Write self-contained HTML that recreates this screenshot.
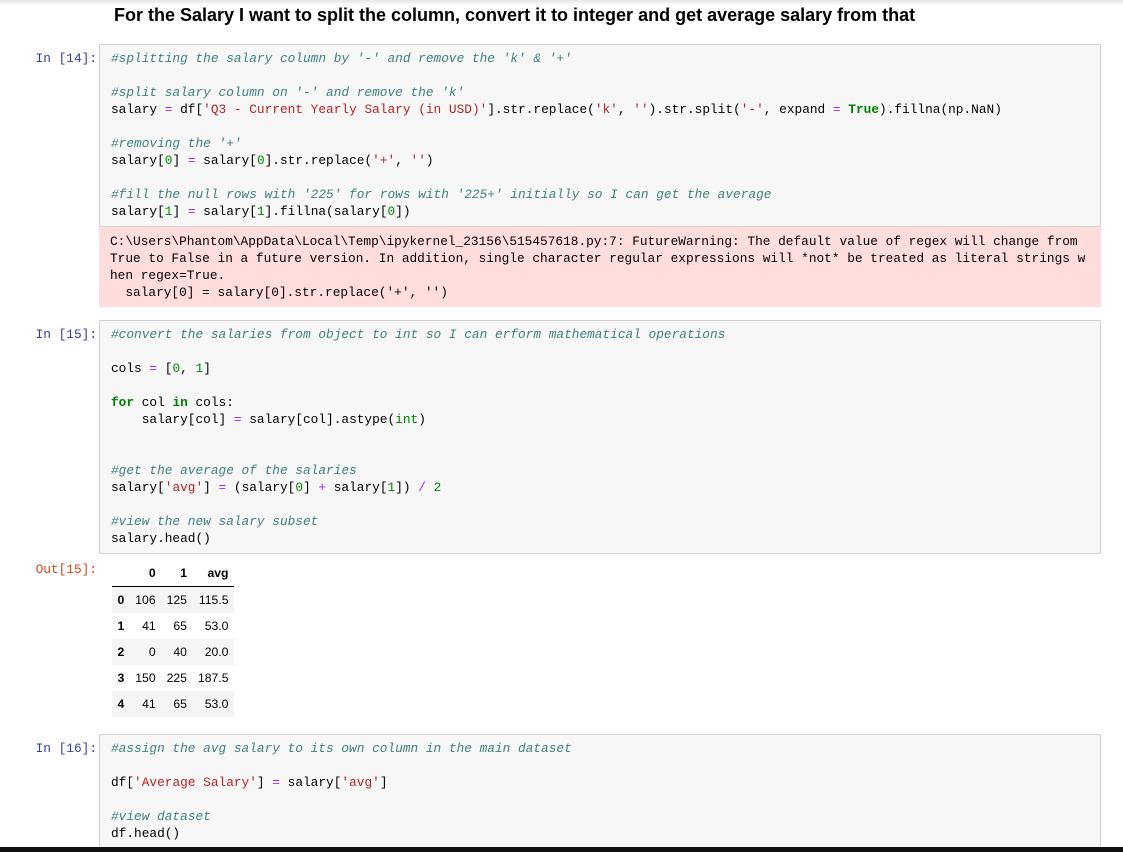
<!DOCTYPE html>
<html><head><style>
html,body{margin:0;width:1123px;height:852px;overflow:hidden}
body{background:#fff;font-family:"Liberation Sans",sans-serif;position:relative}
.top{position:absolute;left:0;top:0;width:1123px;height:6px;background:linear-gradient(#e6e6e6,#fff)}
h3{position:absolute;left:114px;top:5px;margin:0;font-size:18px;font-weight:bold;color:#000}
.p{position:absolute;width:97px;text-align:right;font-family:"Liberation Mono",monospace;font-size:12.8px;color:#303F9F;line-height:17px}
.o{color:#D84315}
.cell{position:absolute;left:99px;width:1000px;background:#f7f7f7;border:1px solid #cfcfcf;border-radius:2px}
pre{margin:0;padding:5px 0 0 11px;font-family:"Liberation Mono",monospace;font-size:12.8px;line-height:17px;color:#000;white-space:pre}
.c{color:#408080;font-style:italic}.s{color:#BA2121}.n{color:#080}.op{color:#AA22FF}.k{color:#008000;font-weight:bold}.b{color:#008000}
.err{position:absolute;left:99px;top:227px;width:1002px;height:80px;background:#fdd}
.err pre{padding-top:6px}
table{position:absolute;left:112px;top:560px;border-collapse:collapse;font-size:12.2px;color:#000}
td,th{text-align:right;padding:0 5.5px;height:26px;line-height:26px}
thead th{border-bottom:1px solid #000;height:25px}
tbody tr:nth-child(odd){background:#f5f5f5}
.bot{position:absolute;left:0;top:847px;width:1123px;height:5px;background:#111;z-index:5}
</style></head><body>
<div class="top"></div>
<h3>For the Salary I want to split the column, convert it to integer and get average salary from that</h3>

<div class="p" style="top:50px">In [14]:</div>
<div class="cell" style="top:44px;height:181px"><pre><span class="c">#splitting the salary column by '-' and remove the 'k' &amp; '+'</span>

<span class="c">#split salary column on '-' and remove the 'k'</span>
salary <span class="op">=</span> df[<span class="s">'Q3 - Current Yearly Salary (in USD)'</span>].str.replace(<span class="s">'k'</span>, <span class="s">''</span>).str.split(<span class="s">'-'</span>, expand <span class="op">=</span> <span class="k">True</span>).fillna(np.NaN)

<span class="c">#removing the '+'</span>
salary[<span class="n">0</span>] <span class="op">=</span> salary[<span class="n">0</span>].str.replace(<span class="s">'+'</span>, <span class="s">''</span>)

<span class="c">#fill the null rows with '225' for rows with '225+' initially so I can get the average</span>
salary[<span class="n">1</span>] <span class="op">=</span> salary[<span class="n">1</span>].fillna(salary[<span class="n">0</span>])</pre></div>
<div class="err"><pre>C:\Users\Phantom\AppData\Local\Temp\ipykernel_23156\515457618.py:7: FutureWarning: The default value of regex will change from
True to False in a future version. In addition, single character regular expressions will *not* be treated as literal strings w
hen regex=True.
  salary[0] = salary[0].str.replace('+', '')</pre></div>

<div class="p" style="top:326px">In [15]:</div>
<div class="cell" style="top:320px;height:232px"><pre><span class="c">#convert the salaries from object to int so I can erform mathematical operations</span>

cols <span class="op">=</span> [<span class="n">0</span>, <span class="n">1</span>]

<span class="k">for</span> col <span class="k">in</span> cols:
    salary[col] <span class="op">=</span> salary[col].astype(<span class="b">int</span>)


<span class="c">#get the average of the salaries</span>
salary[<span class="s">'avg'</span>] <span class="op">=</span> (salary[<span class="n">0</span>] <span class="op">+</span> salary[<span class="n">1</span>]) <span class="op">/</span> <span class="n">2</span>

<span class="c">#view the new salary subset</span>
salary.head()</pre></div>

<div class="p o" style="top:561px">Out[15]:</div>
<table><thead><tr><th></th><th>0</th><th>1</th><th>avg</th></tr></thead>
<tbody>
<tr><th>0</th><td>106</td><td>125</td><td>115.5</td></tr>
<tr><th>1</th><td>41</td><td>65</td><td>53.0</td></tr>
<tr><th>2</th><td>0</td><td>40</td><td>20.0</td></tr>
<tr><th>3</th><td>150</td><td>225</td><td>187.5</td></tr>
<tr><th>4</th><td>41</td><td>65</td><td>53.0</td></tr>
</tbody></table>

<div class="p" style="top:740px">In [16]:</div>
<div class="cell" style="top:734px;height:130px"><pre><span class="c">#assign the avg salary to its own column in the main dataset</span>

df[<span class="s">'Average Salary'</span>] <span class="op">=</span> salary[<span class="s">'avg'</span>]

<span class="c">#view dataset</span>
df.head()</pre></div>
<div class="bot"></div>
</body></html>
